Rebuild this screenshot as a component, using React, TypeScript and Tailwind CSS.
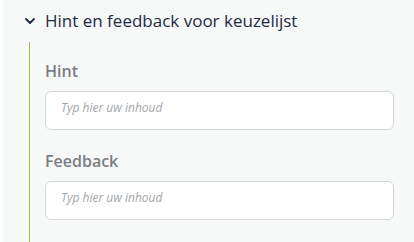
import React from "react";

function Field({ label }: { label: string }) {
  return (
    <div className="flex flex-col">
      <div className="text-[16px] leading-[22px] font-semibold text-[#7a7d82] h-[22px]">{label}</div>
      <div className="mt-[9px] h-[39px] w-[349px] rounded-[6px] border border-[#d4d6d8] bg-white pl-[15px] flex items-start pt-[7px]">
        <span className="italic text-[12px] leading-[18px] text-[#a3a6aa]">Typ hier uw inhoud</span>
      </div>
    </div>
  );
}

export default function App() {
  return (
    <div
      className="w-[414px] h-[242px] bg-white flex overflow-hidden"
      style={{ fontFamily: '"Open Sans", "Noto Sans", sans-serif' }}
    >
      <div className="w-[3px] bg-white" />
      <div className="flex-1 bg-[#f7f9f9] flex flex-col">
        <div className="flex items-center h-[42px] pl-[21px]">
          <svg width="12" height="12" viewBox="0 0 12 12" className="mr-[9px]">
            <path d="M2 4 L6 8 L10 4" fill="none" stroke="#1f2a44" strokeWidth="1.8" strokeLinecap="round" strokeLinejoin="round" />
          </svg>
          <span className="text-[17px] leading-[24px] text-[#1f2a44]">Hint en feedback voor keuzelijst</span>
        </div>
        <div className="ml-[26px] border-l border-[#9cc43e] pl-[15px] flex-1 flex flex-col pt-[18px] gap-[20px]">
          <Field label="Hint" />
          <Field label="Feedback" />
        </div>
      </div>
    </div>
  );
}
